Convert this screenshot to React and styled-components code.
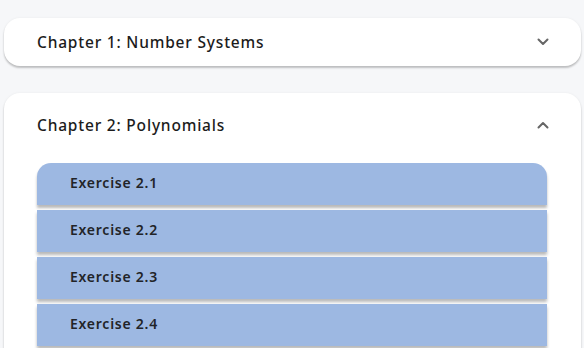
import React, { useState } from 'react';
import styled, { createGlobalStyle } from 'styled-components';

const GlobalStyle = createGlobalStyle`
  html, body {
    margin: 0;
    padding: 0;
    background: #f6f7f9;
    font-family: "Noto Sans", "DejaVu Sans", sans-serif;
  }
`;

const Page = styled.div`
  display: flex;
  flex-direction: column;
  gap: 27px;
  padding: 18px 3px 0 4px;
`;

const Card = styled.div`
  background: #ffffff;
  border-radius: 16px;
  box-shadow: 0 2px 2px rgba(0, 0, 0, 0.22), 0 0 3px rgba(0, 0, 0, 0.05);
  flex-shrink: 0;
`;

const Header = styled.div`
  display: flex;
  align-items: center;
  justify-content: space-between;
  height: ${(p) => (p.$open ? 64 : 48)}px;
  padding: 0 32px 0 33px;
  cursor: pointer;
`;

const Title = styled.span`
  font-size: 15.5px;
  font-weight: 500;
  color: #1c1c1c;
  letter-spacing: 0.8px;
`;

const List = styled.div`
  display: flex;
  flex-direction: column;
  gap: 5px;
  padding: 6px 34px 24px 33px;
`;

const Exercise = styled.div`
  height: 42px;
  box-sizing: border-box;
  display: flex;
  align-items: center;
  padding: 0 0 3px 33px;
  background: #9db8e2;
  border-radius: ${(p) => (p.$first ? '14px 14px 0 0' : '0')};
  box-shadow: 0 3px 3px rgba(0, 0, 0, 0.28);
  font-size: 14px;
  font-weight: 600;
  color: #222428;
  letter-spacing: 0.75px;
`;

const Chevron = ({ up }) => (
  <svg width="12" height="12" viewBox="0 0 12 12" fill="none">
    <path
      d={up ? 'M1.5 8.5L6 4L10.5 8.5' : 'M1.5 3.5L6 8L10.5 3.5'}
      stroke="#666666"
      strokeWidth="2"
      strokeLinecap="round"
      strokeLinejoin="round"
    />
  </svg>
);

const chapters = [
  { title: 'Chapter 1: Number Systems', exercises: ['Exercise 1.1', 'Exercise 1.2'] },
  {
    title: 'Chapter 2: Polynomials',
    exercises: ['Exercise 2.1', 'Exercise 2.2', 'Exercise 2.3', 'Exercise 2.4'],
  },
];

export default function App() {
  const [open, setOpen] = useState(1);

  return (
    <>
      <GlobalStyle />
      <Page>
        {chapters.map((ch, i) => (
          <Card key={ch.title}>
            <Header $open={open === i} onClick={() => setOpen(open === i ? -1 : i)}>
              <Title>{ch.title}</Title>
              <Chevron up={open === i} />
            </Header>
            {open === i && (
              <List>
                {ch.exercises.map((ex, j) => (
                  <Exercise key={ex} $first={j === 0}>
                    {ex}
                  </Exercise>
                ))}
              </List>
            )}
          </Card>
        ))}
      </Page>
    </>
  );
}
